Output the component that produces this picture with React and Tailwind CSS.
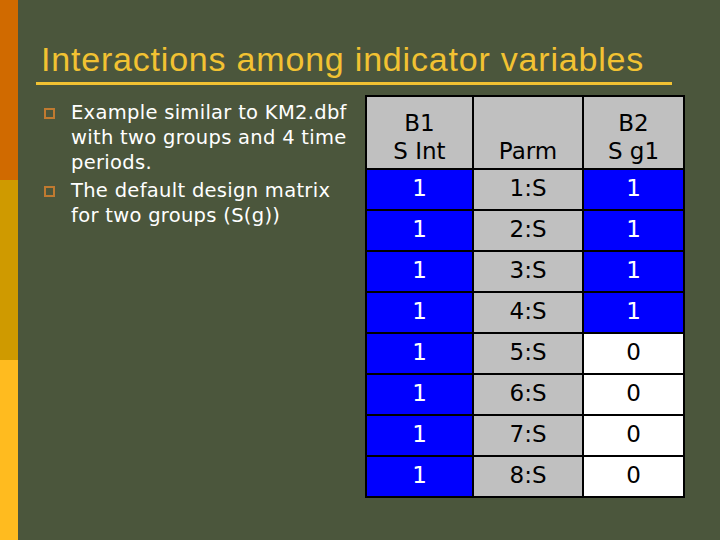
export default function App() {
  const rows = [
    ["1", "1:S", "1"],
    ["1", "2:S", "1"],
    ["1", "3:S", "1"],
    ["1", "4:S", "1"],
    ["1", "5:S", "0"],
    ["1", "6:S", "0"],
    ["1", "7:S", "0"],
    ["1", "8:S", "0"],
  ];
  const body = { fontFamily: '"DejaVu Sans", Verdana, sans-serif' };
  return (
    <div className="w-[720px] h-[540px] bg-[#4b563c] flex overflow-hidden">
      <div className="w-[18px] h-full flex flex-col shrink-0">
        <div className="h-[180px] bg-[#d06a00]" />
        <div className="h-[180px] bg-[#cf9a00]" />
        <div className="flex-1 bg-[#ffbb1f]" />
      </div>
      <div className="flex-1 flex flex-col">
        <div
          className="pl-[23px] pt-[39px] text-[34px] leading-[40px] tracking-[0.8px] text-[#f2c232] whitespace-nowrap"
          style={{ fontFamily: '"Liberation Sans", Arial, sans-serif' }}
        >
          Interactions among indicator variables
        </div>
        <div className="ml-[18px] mt-[3px] w-[636px] h-[3px] bg-[#f2c232]" />
        <div className="flex">
          <div className="w-[347px] pl-[26px] pt-[15px] text-white text-[19.5px] leading-[25px] tracking-[0.3px]" style={body}>
            <div className="flex">
              <div className="w-[27px] shrink-0 pt-[8px]">
                <div className="w-[11px] h-[11px] border-2 border-[#c07a30]" />
              </div>
              <div>
                Example similar to KM2.dbf
                <br />
                with two groups and 4 time
                <br />
                periods.
              </div>
            </div>
            <div className="flex mt-[3px]">
              <div className="w-[27px] shrink-0 pt-[8px]">
                <div className="w-[11px] h-[11px] border-2 border-[#c07a30]" />
              </div>
              <div>
                The default design matrix
                <br />
                for two groups (S(g))
              </div>
            </div>
          </div>
          <div className="pt-[10px]">
            <div
              className="grid grid-cols-[105px_108px_99px] gap-[2px] bg-black p-[2px] text-[23px]"
              style={body}
            >
              <div className="h-[71px] bg-[#c0c0c0] flex flex-col items-center justify-end pb-[3px] leading-[28px] text-black">
                <span>B1</span>
                <span>S Int</span>
              </div>
              <div className="h-[71px] bg-[#c0c0c0] flex flex-col items-center justify-end pb-[3px] leading-[28px] text-black">
                <span>Parm</span>
              </div>
              <div className="h-[71px] bg-[#c0c0c0] flex flex-col items-center justify-end pb-[3px] leading-[28px] text-black">
                <span>B2</span>
                <span>S g1</span>
              </div>
              {rows.map((r, i) => (
                <div key={i} className="contents">
                  <div className="h-[39px] bg-[#0000ff] text-white flex items-center justify-center pb-[3px]">{r[0]}</div>
                  <div className="h-[39px] bg-[#c0c0c0] text-black flex items-center justify-center pb-[3px]">{r[1]}</div>
                  <div
                    className={
                      r[2] === "1"
                        ? "h-[39px] bg-[#0000ff] text-white flex items-center justify-center pb-[3px]"
                        : "h-[39px] bg-white text-black flex items-center justify-center pb-[3px]"
                    }
                  >
                    {r[2]}
                  </div>
                </div>
              ))}
            </div>
          </div>
        </div>
      </div>
    </div>
  );
}
